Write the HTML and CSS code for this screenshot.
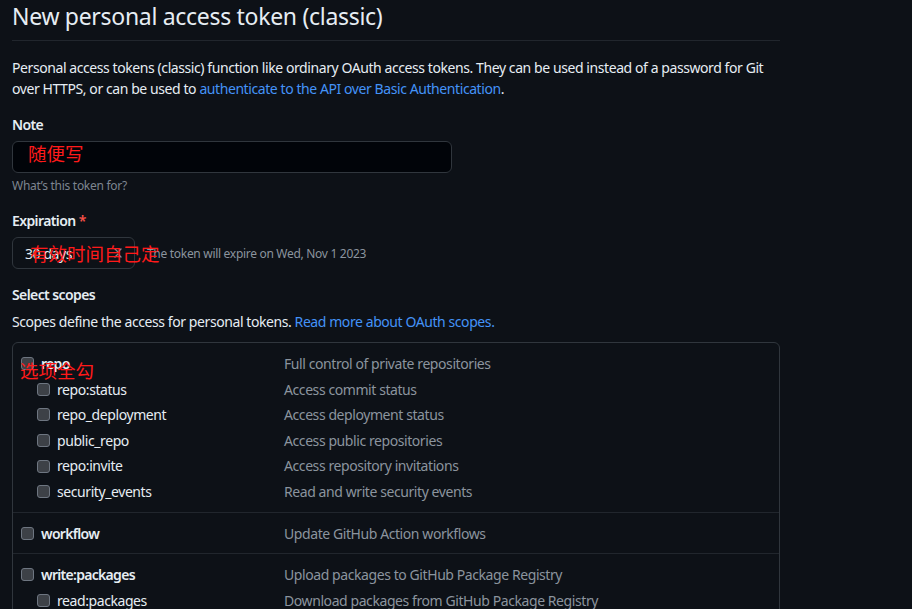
FILE: index.html
```html
<!DOCTYPE html>
<html lang="en">
<head>
<meta charset="utf-8">
<title>New personal access token (classic)</title>
<link rel="stylesheet" href="styles.css">
</head>
<body>
<main class="page">
  <header class="head">
    <h1 class="title">New personal access token (classic)</h1>
  </header>
  <p class="intro">Personal access tokens (classic) function like ordinary OAuth access tokens. They can be used instead of a password for Git over HTTPS, or can be used to <a class="link" href="#">authenticate to the API over Basic Authentication</a>.</p>

  <section class="group">
    <div class="label">Note</div>
    <div class="input-wrap">
      <div class="input"></div>
      <span class="mark mark-note">随便写</span>
    </div>
    <div class="hint">What’s this token for?</div>
  </section>

  <section class="group">
    <div class="label">Expiration <span class="req">*</span></div>
    <div class="exp-row">
      <div class="select">30 days
        <svg class="caret" width="16" height="16" viewBox="0 0 16 16"><path d="M5 4 8 7 11 4M5 12 8 9 11 12" fill="none" stroke="#7d8590" stroke-width="1.4" stroke-linecap="round" stroke-linejoin="round"/></svg>
      </div>
      <span class="exp-note">The token will expire on Wed, Nov 1 2023</span>
      <span class="mark mark-exp">有效时间自己定</span>
    </div>
  </section>

  <section class="group">
    <div class="label">Select scopes</div>
    <p class="scopes-desc">Scopes define the access for personal tokens. <a class="link" href="#">Read more about OAuth scopes.</a></p>
  </section>

  <div class="scopes">
    <ul class="scope-group">
      <li class="row main"><span class="name"><span class="cb"></span>repo</span><span class="desc">Full control of private repositories</span><span class="mark mark-repo">选项全勾</span></li>
      <li class="row sub"><span class="name"><span class="cb"></span>repo:status</span><span class="desc">Access commit status</span></li>
      <li class="row sub"><span class="name"><span class="cb"></span>repo_deployment</span><span class="desc">Access deployment status</span></li>
      <li class="row sub"><span class="name"><span class="cb"></span>public_repo</span><span class="desc">Access public repositories</span></li>
      <li class="row sub"><span class="name"><span class="cb"></span>repo:invite</span><span class="desc">Access repository invitations</span></li>
      <li class="row sub"><span class="name"><span class="cb"></span>security_events</span><span class="desc">Read and write security events</span></li>
    </ul>
    <ul class="scope-group">
      <li class="row main"><span class="name"><span class="cb"></span>workflow</span><span class="desc">Update GitHub Action workflows</span></li>
    </ul>
    <ul class="scope-group">
      <li class="row main"><span class="name"><span class="cb"></span>write:packages</span><span class="desc">Upload packages to GitHub Package Registry</span></li>
      <li class="row sub"><span class="name"><span class="cb"></span>read:packages</span><span class="desc">Download packages from GitHub Package Registry</span></li>
    </ul>
  </div>
</main>
</body>
</html>
```

FILE: styles.css
```css
html, body {
  margin: 0;
  padding: 0;
  background: #0d1117;
}
body {
  color: #e6edf3;
  font-family: "Noto Sans", "Liberation Sans", sans-serif;
  font-size: 14px;
  line-height: 21px;
  letter-spacing: -0.42px;
  overflow: hidden;
}
.page {
  width: 768px;
  padding-left: 12px;
}
.head {
  border-bottom: 1px solid #21262d;
  padding-bottom: 8px;
}
.title {
  margin: 0;
  font-size: 23px;
  line-height: 32px;
  font-weight: 400;
  letter-spacing: -0.3px;
}
.intro {
  margin: 16px 0 0;
}
.link {
  color: #4493f8;
  text-decoration: none;
}
.group {
  margin-top: 15px;
}
.label {
  font-weight: 600;
  letter-spacing: -0.6px;
  margin-bottom: 6px;
}
.req {
  color: #f85149;
}
.input-wrap {
  position: relative;
  width: 440px;
}
.input {
  height: 30px;
  border: 1px solid #30363d;
  border-radius: 6px;
  background: #010409;
}
.hint {
  margin-top: 4px;
  font-size: 12px;
  line-height: 18px;
  letter-spacing: -0.28px;
  color: #7d8590;
}
.exp-row {
  position: relative;
  display: flex;
  align-items: center;
  gap: 12px;
}
.select {
  box-sizing: border-box;
  width: 123px;
  height: 32px;
  border: 1px solid #30363d;
  border-radius: 6px;
  background: #0d1117;
  padding-left: 12px;
  display: flex;
  align-items: center;
  justify-content: space-between;
  padding-right: 8px;
  font-size: 14px;
}
.exp-note {
  font-size: 12px;
  letter-spacing: -0.3px;
  color: #8b949e;
}
.scopes-desc {
  margin: 0;
}
.scopes {
  margin-top: 10px;
  border: 1px solid #30363d;
  border-radius: 6px;
}
.scope-group {
  list-style: none;
  margin: 0;
  padding: 8px 0 7px 8px;
}
.scope-group + .scope-group {
  border-top: 1px solid #21262d;
}
.row {
  position: relative;
  display: grid;
  grid-template-columns: 263px 1fr;
  line-height: 25.6px;
}
.name {
  display: flex;
  align-items: center;
  gap: 7px;
}
.main .name {
  font-weight: 600;
  letter-spacing: -0.7px;
}
.sub .name {
  padding-left: 16px;
}
.cb {
  box-sizing: border-box;
  width: 13px;
  height: 13px;
  border: 1px solid #6e7681;
  border-radius: 3px;
  background: #3d4147;
  flex: none;
}
.desc {
  color: #8b949e;
}
.mark {
  position: absolute;
  color: #ff1a1a;
  font-family: "Noto Sans CJK SC", sans-serif;
  font-size: 18.5px;
  line-height: 22px;
  font-weight: 400;
  letter-spacing: 0;
  white-space: nowrap;
  pointer-events: none;
}
.mark-note {
  left: 16px;
  top: 1px;
}
.mark-exp {
  left: 18px;
  top: 5px;
}
.mark-repo {
  left: -1px;
  top: 8px;
}
```
